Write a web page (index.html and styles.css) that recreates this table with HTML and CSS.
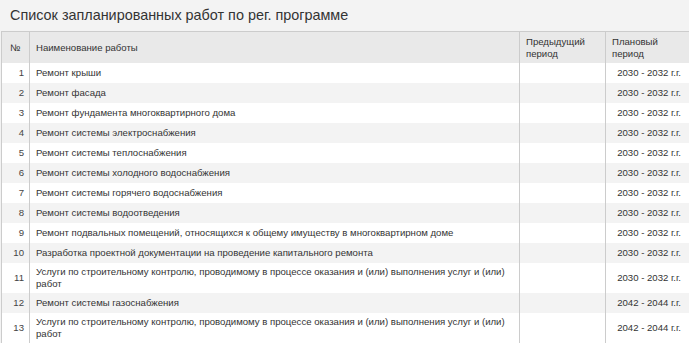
FILE: index.html
```html
<!DOCTYPE html>
<html lang="ru">
<head>
<meta charset="utf-8">
<title>Список запланированных работ</title>
<link rel="stylesheet" href="styles.css">
</head>
<body>
<div class="panel">
  <h1 class="title">Список запланированных работ по рег. программе</h1>
  <table class="works">
    <colgroup>
      <col class="c-num">
      <col class="c-name">
      <col class="c-prev">
      <col class="c-plan">
    </colgroup>
    <thead>
      <tr>
        <th class="num-h">№</th>
        <th>Наименование работы</th>
        <th>Предыдущий<br>период</th>
        <th>Плановый<br>период</th>
      </tr>
    </thead>
    <tbody>
      <tr><td class="num">1</td><td>Ремонт крыши</td><td></td><td class="plan">2030 - 2032 г.г.</td></tr>
      <tr><td class="num">2</td><td>Ремонт фасада</td><td></td><td class="plan">2030 - 2032 г.г.</td></tr>
      <tr><td class="num">3</td><td>Ремонт фундамента многоквартирного дома</td><td></td><td class="plan">2030 - 2032 г.г.</td></tr>
      <tr><td class="num">4</td><td>Ремонт системы электроснабжения</td><td></td><td class="plan">2030 - 2032 г.г.</td></tr>
      <tr><td class="num">5</td><td>Ремонт системы теплоснабжения</td><td></td><td class="plan">2030 - 2032 г.г.</td></tr>
      <tr><td class="num">6</td><td>Ремонт системы холодного водоснабжения</td><td></td><td class="plan">2030 - 2032 г.г.</td></tr>
      <tr><td class="num">7</td><td>Ремонт системы горячего водоснабжения</td><td></td><td class="plan">2030 - 2032 г.г.</td></tr>
      <tr><td class="num">8</td><td>Ремонт системы водоотведения</td><td></td><td class="plan">2030 - 2032 г.г.</td></tr>
      <tr><td class="num">9</td><td>Ремонт подвальных помещений, относящихся к общему имуществу в многоквартирном доме</td><td></td><td class="plan">2030 - 2032 г.г.</td></tr>
      <tr><td class="num">10</td><td>Разработка проектной документации на проведение капитального ремонта</td><td></td><td class="plan">2030 - 2032 г.г.</td></tr>
      <tr><td class="num">11</td><td>Услуги по строительному контролю, проводимому в процессе оказания и (или) выполнения услуг и (или) работ</td><td></td><td class="plan">2030 - 2032 г.г.</td></tr>
      <tr><td class="num">12</td><td>Ремонт системы газоснабжения</td><td></td><td class="plan">2042 - 2044 г.г.</td></tr>
      <tr><td class="num">13</td><td>Услуги по строительному контролю, проводимому в процессе оказания и (или) выполнения услуг и (или) работ</td><td></td><td class="plan">2042 - 2044 г.г.</td></tr>
    </tbody>
  </table>
</div>
</body>
</html>
```

FILE: styles.css
```css
html, body {
  margin: 0;
  padding: 0;
  background: #ffffff;
}

.panel {
  background: #f3f3f3;
  font-family: "Liberation Sans", Arial, sans-serif;
  color: #333333;
}

.title {
  margin: 0;
  height: 31px;
  padding: 0 0 0 10px;
  font-size: 14.4px;
  font-weight: normal;
  line-height: 31px;
  color: #333333;
}

.works {
  margin-left: 1px;
  width: calc(100% - 1px);
  border-collapse: separate;
  border-spacing: 0;
  table-layout: fixed;
  font-size: 9.6px;
  line-height: 12px;
}

.c-num { width: 28px; }
.c-name { width: 490px; }
.c-prev { width: 86px; }
.c-plan { width: auto; }

.works th,
.works td {
  border-left: 1px solid #cccccc;
  vertical-align: middle;
  text-align: left;
  box-sizing: border-box;
}

.works th {
  background: #e9e9e9;
  border-top: 1px solid #cccccc;
  height: 32px;
  padding: 2px 6px;
  font-weight: normal;
  color: #333333;
}

.works th.num-h {
  padding: 2px 4px 2px 8px;
}

.works td {
  height: 20px;
  padding: 3px 6px 3px 6px;
  color: #333333;
}

.works tbody tr:nth-child(odd) td {
  background: #ffffff;
}

.works tbody tr:nth-child(even) td {
  background: #f3f3f3;
}

.works td.num {
  text-align: right;
  padding-right: 5px;
  padding-left: 2px;
  color: #444444;
}

.works td.plan {
  text-align: right;
  padding-right: 8px;
  white-space: nowrap;
}
```
